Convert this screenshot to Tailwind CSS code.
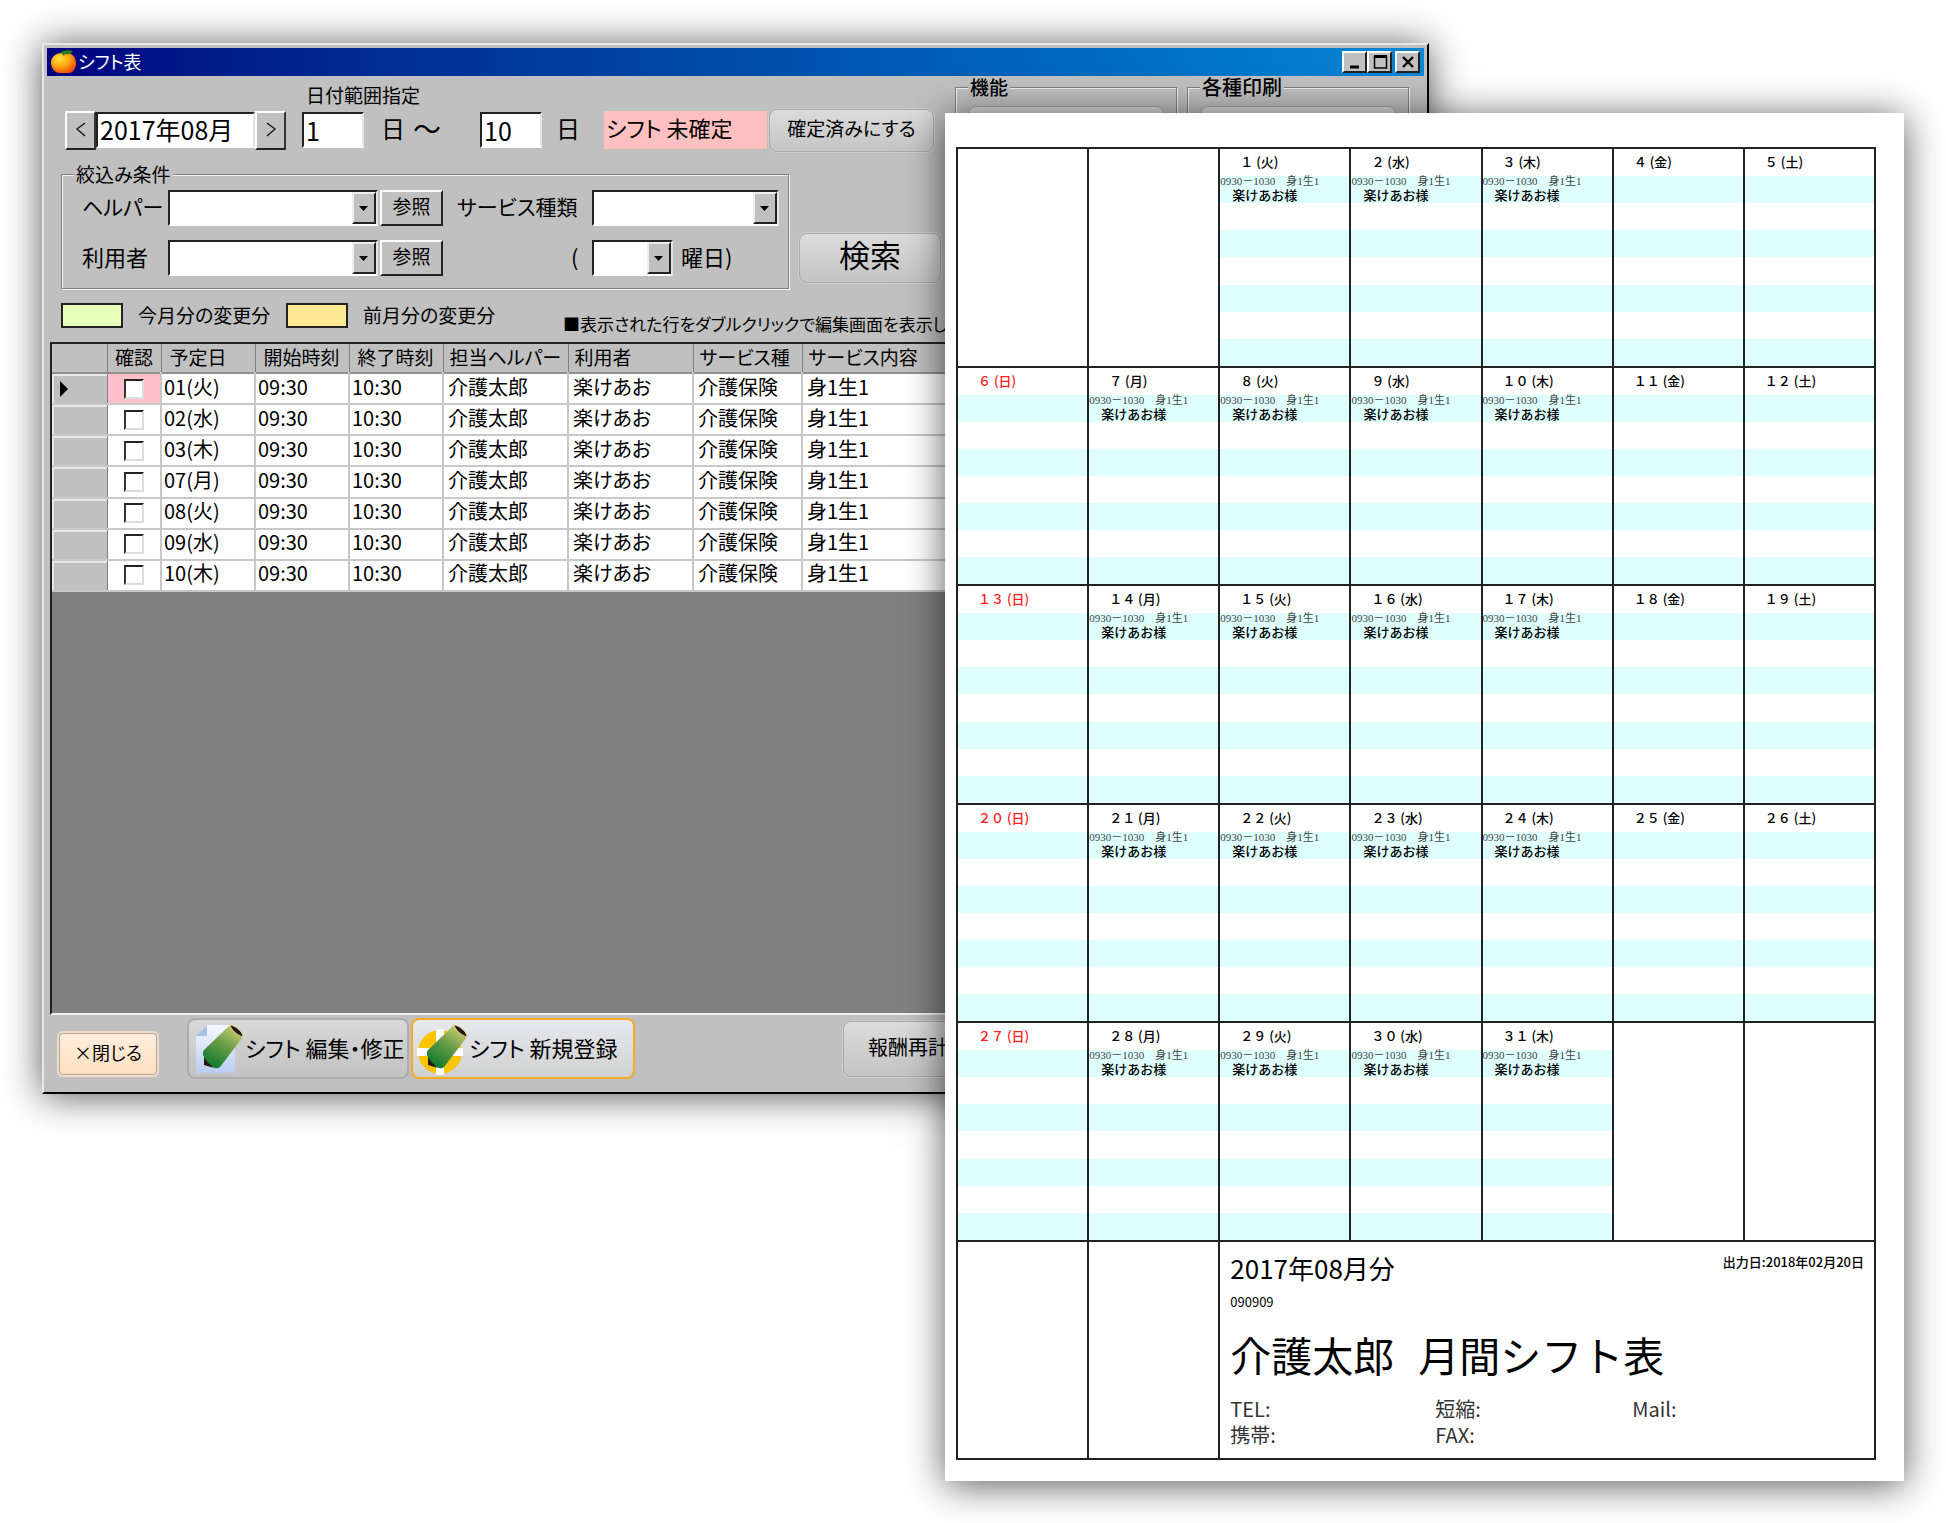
<!DOCTYPE html>
<html lang="ja">
<head>
<meta charset="utf-8">
<title>シフト表</title>
<script src="https://cdn.jsdelivr.net/npm/@tailwindcss/browser@4"></script>
</head>
<body class="min-h-screen bg-white text-black font-['Noto_Sans_CJK_JP',sans-serif]">
<main class="grid grid-cols-[42px_903fr_484fr_475fr_42px] items-start overflow-hidden pb-[42px]">

  <!-- Application window -->
  <section class="col-start-2 col-span-2 row-start-1 mt-[43px] min-w-0 border-2 border-t-[#e8e8e8] border-l-[#e8e8e8] border-r-black border-b-black bg-[#c0c0c0] p-[3px] shadow-[0_2px_36px_rgba(0,0,0,0.65)] [font-feature-settings:'palt']">
    <header class="flex h-7 items-center bg-linear-to-r from-[#00007f] to-[#1086d6] pl-[3px] pr-1">
      <svg class="h-6 w-7" viewBox="0 0 28 24" aria-hidden="true">
        <defs><radialGradient id="or" cx=".35" cy=".3" r=".8"><stop offset="0" stop-color="#ffe23a"/><stop offset=".5" stop-color="#ffa510"/><stop offset="1" stop-color="#f03a05"/></radialGradient></defs>
        <path d="M12 3C20 1 26 6 26 13c0 6-3 10-7 10-3 0-6 0-9 0-5 0-9-5-9-10C1 7 6 3 12 3z" fill="url(#or)"/>
        <path d="M11 2c3-2 8-2 12-1-2 3-5 4-8 3l-1 2-2-2z" fill="#2d7d1c"/>
      </svg>
      <h1 class="flex-1 pb-[2px] text-[18px] leading-6 text-white">シフト表</h1>
      <div class="flex">
        <button aria-label="最小化" class="flex h-[22px] w-[25px] items-center justify-center border-2 border-t-white border-l-white border-r-[#222] border-b-[#222] bg-[#c0c0c0]"><svg class="h-4 w-4" viewBox="0 0 16 16"><path d="M3 13h9" stroke="#000" stroke-width="3"/></svg></button>
        <button aria-label="最大化" class="flex h-[22px] w-[25px] items-center justify-center border-2 border-t-white border-l-white border-r-[#222] border-b-[#222] bg-[#c0c0c0]"><svg class="h-4 w-4" viewBox="0 0 16 16"><path d="M2 2.5h13" stroke="#000" stroke-width="3"/><path d="M2.5 2v12h12V2" fill="none" stroke="#000" stroke-width="1.5"/></svg></button>
        <button aria-label="閉じる" class="ml-[3px] flex h-[22px] w-[25px] items-center justify-center border-2 border-t-white border-l-white border-r-[#222] border-b-[#222] bg-[#c0c0c0]"><svg class="h-4 w-4" viewBox="0 0 16 16"><path d="M3 3l10 10M13 3L3 13" stroke="#000" stroke-width="2.4"/></svg></button>
      </div>
    </header>

    <div class="flex">
      <div class="w-[908px] shrink-0 pl-[14px] pt-1">
        <p class="pl-[245px] text-[19px] leading-[30px]">日付範囲指定</p>
        <div class="flex h-10 items-center pl-1 *:shrink-0">
          <button class="flex h-[39px] w-[31px] items-center justify-center border-2 border-t-white border-l-white border-r-[#333] border-b-[#222]" aria-label="前月"><svg class="h-5 w-4" viewBox="0 0 16 20"><path d="M12 3L4 9l8 7" fill="none" stroke="#111" stroke-width="1.3"/></svg></button>
          <input aria-label="年月" value="2017年08月" class="h-9 w-[159px] border-2 border-t-[#222] border-l-[#222] border-r-[#e4e4e4] border-b-white bg-white pl-[2px] pb-[2px] text-[25px] leading-7">
          <button class="flex h-[39px] w-[31px] items-center justify-center border-2 border-t-white border-l-white border-r-[#333] border-b-[#222]" aria-label="翌月"><svg class="h-5 w-4" viewBox="0 0 16 20"><path d="M4 3l8 6-8 7" fill="none" stroke="#111" stroke-width="1.3"/></svg></button>
          <input id="from" aria-label="開始日" value="1" class="ml-4 h-9 w-[62px] border-2 border-t-[#222] border-l-[#222] border-r-[#e4e4e4] border-b-white bg-white pl-[2px] text-[25px] leading-7">
          <label for="from" class="ml-[17px] pb-[5px] text-[24px] leading-8">日</label>
          <span class="ml-2 w-[67px] pb-[5px] text-[28px] leading-8">～</span>
          <input id="to" aria-label="終了日" value="10" class="h-9 w-[62px] border-2 border-t-[#222] border-l-[#222] border-r-[#e4e4e4] border-b-white bg-white pl-[2px] text-[25px] leading-7">
          <label for="to" class="ml-[14px] pb-[5px] text-[24px] leading-8">日</label>
          <p class="ml-auto h-[38px] w-[163px] bg-[#ffc0c0] pl-[2px] text-[22px] leading-8">シフト 未確定</p>
          <button class="ml-[2px] mr-[21px] h-[43px] w-[165px] rounded-lg border border-[#aaa] bg-linear-to-b from-[#dcdcdc] to-[#c4c4c4] pb-1 text-[19px] leading-8 ring-1 ring-[#cfcfcf]">確定済みにする</button>
        </div>

        <div class="mt-[14px] flex items-end">
          <fieldset class="w-[728px] shrink-0 border border-[#808080] pb-3 pl-5 shadow-[1px_1px_0_#f4f4f4,inset_1px_1px_0_#f4f4f4]">
            <legend class="-ml-2 bg-[#c0c0c0] px-[2px] text-[19px] leading-5">絞込み条件</legend>
            <div class="grid grid-cols-[86px_212px_63px_1fr] items-center gap-y-[14px] whitespace-nowrap pt-[6px]">
              <label for="helper" class="pb-1 text-[21px] leading-8">ヘルパー</label>
              <div class="flex h-9 w-[210px] border-2 border-t-[#222] border-l-[#222] border-r-[#e4e4e4] border-b-white bg-white">
                <select id="helper" class="min-w-0 flex-1 appearance-none bg-white"><option></option></select>
                <span class="flex w-6 items-center justify-center border-2 border-t-[#eee] border-l-[#eee] border-r-[#222] border-b-[#222] bg-[#c0c0c0]"><svg class="h-2 w-2.5 shrink-0" viewBox="0 0 10 8"><path d="M0 2h9L4.500 7z"/></svg></span>
              </div>
              <button class="h-9 w-[63px] border-2 border-t-white border-l-white border-r-[#222] border-b-[#222] pb-1 text-[19px] leading-7">参照</button>
              <div class="flex items-center pl-[14px]">
                <label for="kind" class="w-[135px] pb-1 text-[21px] leading-8">サービス種類</label>
                <div class="flex h-9 w-[187px] border-2 border-t-[#222] border-l-[#222] border-r-[#e4e4e4] border-b-white bg-white">
                  <select id="kind" class="min-w-0 flex-1 appearance-none bg-white"><option></option></select>
                  <span class="flex w-6 items-center justify-center border-2 border-t-[#eee] border-l-[#eee] border-r-[#222] border-b-[#222] bg-[#c0c0c0]"><svg class="h-2 w-2.5 shrink-0" viewBox="0 0 10 8"><path d="M0 2h9L4.500 7z"/></svg></span>
                </div>
              </div>
              <label for="user" class="pb-1 text-[22px] leading-8">利用者</label>
              <div class="flex h-9 w-[210px] border-2 border-t-[#222] border-l-[#222] border-r-[#e4e4e4] border-b-white bg-white">
                <select id="user" class="min-w-0 flex-1 appearance-none bg-white"><option></option></select>
                <span class="flex w-6 items-center justify-center border-2 border-t-[#eee] border-l-[#eee] border-r-[#222] border-b-[#222] bg-[#c0c0c0]"><svg class="h-2 w-2.5 shrink-0" viewBox="0 0 10 8"><path d="M0 2h9L4.500 7z"/></svg></span>
              </div>
              <button class="h-9 w-[63px] border-2 border-t-white border-l-white border-r-[#222] border-b-[#222] pb-1 text-[19px] leading-7">参照</button>
              <div class="flex items-center pl-[128px]">
                <span class="w-[21px] pb-1 text-[22px] leading-8">(</span>
                <div class="flex h-9 w-[81px] border-2 border-t-[#222] border-l-[#222] border-r-[#e4e4e4] border-b-white bg-white">
                  <select id="dow" class="min-w-0 flex-1 appearance-none bg-white"><option></option></select>
                  <span class="flex w-6 items-center justify-center border-2 border-t-[#eee] border-l-[#eee] border-r-[#222] border-b-[#222] bg-[#c0c0c0]"><svg class="h-2 w-2.5 shrink-0" viewBox="0 0 10 8"><path d="M0 2h9L4.500 7z"/></svg></span>
                </div>
                <label for="dow" class="pb-1 pl-2 text-[22px] leading-8">曜日)</label>
              </div>
            </div>
          </fieldset>
          <button class="mb-[6px] ml-[10px] h-[50px] w-[142px] shrink-0 rounded-lg border border-[#aaa] bg-linear-to-b from-[#dcdcdc] to-[#c4c4c4] pb-[9px] text-[31px] leading-9 ring-1 ring-[#cfcfcf]">検索</button>
        </div>

        <div class="mt-[14px] flex h-[35px] whitespace-nowrap text-[19px] leading-[23px] *:shrink-0">
          <span class="h-[25px] w-[62px] border-2 border-[#222] bg-[#e6ffb9]"></span>
          <span class="w-[163px] pl-[15px]">今月分の変更分</span>
          <span class="h-[25px] w-[62px] border-2 border-[#222] bg-[#ffe994]"></span>
          <span class="w-[215px] pl-[15px]">前月分の変更分</span>
          <span class="self-end pb-[3px] text-[17px]">■表示された行をダブルクリックで編集画面を表示し</span>
        </div>
      </div>

      <div class="flex flex-1 gap-[10px] pb-2 pr-[15px] pt-px">
        <fieldset class="min-w-0 flex-1 border border-[#808080] px-3 shadow-[1px_1px_0_#f4f4f4,inset_1px_1px_0_#f4f4f4]">
          <legend class="bg-[#c0c0c0] px-[2px] text-[19px] font-medium leading-5">機能</legend>
          <button aria-label="機能" class="mt-[9px] block h-11 w-full rounded-lg border border-[#aaa] bg-linear-to-b from-[#dcdcdc] to-[#c4c4c4]"></button>
        </fieldset>
        <fieldset class="min-w-0 flex-1 border border-[#808080] px-3 shadow-[1px_1px_0_#f4f4f4,inset_1px_1px_0_#f4f4f4]">
          <legend class="bg-[#c0c0c0] px-[2px] text-[20px] font-medium leading-5">各種印刷</legend>
          <button aria-label="各種印刷" class="mt-[9px] block h-11 w-full rounded-lg border border-[#aaa] bg-linear-to-b from-[#dcdcdc] to-[#c4c4c4]"></button>
        </fieldset>
      </div>
    </div>

    <div class="ml-[3px] mt-1 min-h-[673px] border-2 border-t-[#222] border-l-[#222] border-r-white border-b-[#f0f0f0] bg-[#808080]">
      <table class="h-[248px] w-full table-fixed border-collapse bg-white text-[20px] leading-6">
        <colgroup><col class="w-[55px]"><col class="w-[54px]"><col class="w-[94px]"><col class="w-[94px]"><col class="w-[94px]"><col class="w-[125px]"><col class="w-[125px]"><col class="w-[109px]"><col></colgroup>
        <thead>
          <tr class="h-[29px] border-b-2 border-[#909090] bg-[#c0c0c0] text-left text-[19px] leading-[22px] *:pb-[3px]">
            <td class="border-r border-[#808080]"></td>
            <th class="border-r border-[#808080] px-1 text-center font-normal whitespace-nowrap">確認</th>
            <th class="border-r border-[#808080] pl-2 font-normal whitespace-nowrap">予定日</th>
            <th class="border-r border-[#808080] pl-2 font-normal whitespace-nowrap">開始時刻</th>
            <th class="border-r border-[#808080] pl-2 font-normal whitespace-nowrap">終了時刻</th>
            <th class="border-r border-[#808080] pl-[6px] font-normal whitespace-nowrap">担当ヘルパー</th>
            <th class="border-r border-[#808080] pl-[6px] font-normal whitespace-nowrap">利用者</th>
            <th class="border-r border-[#808080] pl-[6px] font-normal whitespace-nowrap">サービス種</th>
            <th class="pl-[6px] font-normal whitespace-nowrap">サービス内容</th>
          </tr>
        </thead>
        <tbody id="rows"></tbody>
      </table>
    </div>

    <footer class="flex items-center whitespace-nowrap pb-[10px] pl-3 pt-[3px] *:shrink-0">
      <button class="mb-1 h-[42px] w-[98px] self-end rounded-sm border border-[#b0a8a0] bg-linear-to-b from-[#ffeedd] to-[#ffdfc0] pb-1 text-[18px] leading-8 ring-2 ring-[#f3dcc6]">×閉じる</button>
      <button class="ml-[30px] flex h-[61px] w-[222px] items-center rounded-lg border-2 border-[#ababab] bg-linear-to-b from-[#d8d8d8] to-[#c2c2c2] pl-[6px] text-[22px] leading-8">
        <svg class="h-[50px] w-[50px] shrink-0" viewBox="0 0 50 50" aria-hidden="true">
          <defs>
            <linearGradient id="pg" x1=".8" y1="0" x2=".2" y2="1"><stop offset="0" stop-color="#d3cf70"/><stop offset=".45" stop-color="#6a9c48"/><stop offset="1" stop-color="#06782a"/></linearGradient>
            <linearGradient id="pp" x1="0" y1="0" x2="0" y2="1"><stop offset="0" stop-color="#f4f8ff"/><stop offset="1" stop-color="#b9cdf0"/></linearGradient>
            <g id="pencil"><path d="M9 33v8l10 3z" fill="#2a1612"/><path d="M35 1c4 1 13 6 13 12L25 43q-2 2-5 1Q12 40 8 31q-1-3 1-5z" fill="url(#pg)"/><path d="M35 1c4 0 13 6 13 12-5-1-12-7-13-12z" fill="#2a1612" stroke="#e5d88a" stroke-width="1"/></g>
          </defs>
          <path d="M12 1h28v48H1V12z" fill="url(#pp)"/><path d="M12 1v11H1z" fill="#a9bfe6"/>
          <use href="#pencil"/>
        </svg>
        <span class="pb-1">シフト 編集・修正</span>
      </button>
      <button class="ml-[2px] flex h-[61px] w-[224px] items-center rounded-lg border-2 border-[#f8ab22] bg-linear-to-b from-[#e6e9ee] to-[#d0d0d0] pl-[4px] text-[22px] leading-8">
        <svg class="h-[52px] w-[52px] shrink-0" viewBox="0 0 52 52" aria-hidden="true">
          <circle cx="23" cy="29" r="22" fill="#ffc400"/><path d="M19 6h8v46h-8zM0 25h46v8H0z" fill="#fff"/>
          <use href="#pencil" transform="translate(2 1)"/>
        </svg>
        <span class="pb-1">シフト 新規登録</span>
      </button>
      <button class="ml-[208px] h-14 w-[170px] rounded-lg border border-[#aaa] bg-linear-to-b from-[#dcdcdc] to-[#c4c4c4] pb-1 pl-6 text-left text-[20px] leading-8 ring-1 ring-[#cfcfcf]">報酬再計算</button>
    </footer>
  </section>

  <!-- Printed monthly calendar -->
  <section class="col-start-3 col-span-2 row-start-1 z-10 mt-[113px] min-w-0 bg-white pb-[21px] pl-[11px] pr-7 pt-[34px] shadow-[0_4px_36px_rgba(0,0,0,0.65)]">
    <table class="w-full table-fixed border-collapse">
      <tbody id="cal"></tbody>
    </table>
  </section>
</main>

<template id="summary">
  <td colspan="5" class="border-2 border-[#222] p-0 align-top">
    <div class="pl-[10px] pr-[10px] pt-[6px]">
      <div class="flex justify-between">
        <h2 class="text-[26px] leading-10">2017年08月分</h2>
        <p class="text-[13px] leading-7 font-medium">出力日:2018年02月20日</p>
      </div>
      <p class="pt-1 text-[13px] leading-5">090909</p>
      <p class="flex gap-6 pt-3 text-[41px] leading-[60px]"><span>介護太郎</span><span>月間シフト表</span></p>
      <div class="grid grid-cols-[205px_197px_1fr] pt-3 text-[20px] leading-[26px] text-[#333]">
        <span>TEL:</span><span>短縮:</span><span>Mail:</span>
        <span>携帯:</span><span>FAX:</span>
      </div>
    </div>
  </td>
</template>

<script>
  const shifts = ['01(火)', '02(水)', '03(木)', '07(月)', '08(火)', '09(水)', '10(木)'];
  document.getElementById('rows').innerHTML = shifts.map((d, i) => `
    <tr class="border-b-2 border-[#c8c8c8]">
      <td class="border-r border-t border-[#808080] bg-[#c0c0c0] p-0 pl-2 shadow-[inset_2px_2px_0_#e8e8e8]">${i ? '' : '<svg class="h-4 w-2" viewBox="0 0 8 16"><path d="M0 0l8 8-8 8z"/></svg>'}</td>
      <td class="border-r-2 border-[#c8c8c8] p-0 ${i ? 'bg-white' : 'bg-[#ffc0cb]'}"><input type="checkbox" aria-label="確認 ${d}" class="mx-auto block h-5 w-5 appearance-none border-2 border-t-[#222] border-l-[#333] border-r-[#ddd] border-b-[#ddd] bg-white"></td>
      <td class="border-r-2 border-[#c8c8c8] p-0 pb-1 pl-[2px]">${d}</td>
      <td class="border-r-2 border-[#c8c8c8] p-0 pb-1 pl-[2px]">09:30</td>
      <td class="border-r-2 border-[#c8c8c8] p-0 pb-1 pl-[2px]">10:30</td>
      <td class="border-r-2 border-[#c8c8c8] p-0 pb-1 pl-1">介護太郎</td>
      <td class="border-r-2 border-[#c8c8c8] p-0 pb-1 pl-1">楽けあお</td>
      <td class="border-r-2 border-[#c8c8c8] p-0 pb-1 pl-1">介護保険</td>
      <td class="p-0 pb-1 pl-1">身1生1</td>
    </tr>`).join('');

  const wide = n => String(n).replace(/\d/g, c => String.fromCharCode(c.charCodeAt(0) + 0xFEE0));
  const days = '日月火水木金土';
  const blank = '<td class="border-2 border-[#222] p-0"></td>';
  let html = '';
  for (let w = 0; w < 5; w++) {
    html += w % 2 ? '<tr class="h-[218px]">' : '<tr class="h-[219px]">';
    for (let c = 0; c < 7; c++) {
      const n = w * 7 + c - 1;
      if (n < 1 || n > 31) { html += blank; continue; }
      const work = c > 0 && c < 5;
      html += `<td class="border-2 border-[#222] bg-[repeating-linear-gradient(to_bottom,#fff_0_12.5%,#dfffff_12.5%_25%)] p-0 align-top">
        <p class="pl-5 pt-[3px] text-[13px] leading-5 font-medium ${c ? 'text-black' : 'text-[#ff2020]'}">${wide(n)} (${days[c]})</p>
        ${work ? `<p class="overflow-hidden whitespace-nowrap pt-[3px] font-['Liberation_Serif','Noto_Sans_CJK_JP',serif] text-[11px] leading-3 text-[#444]">0930－1030　身1生1</p>
        <p class="pl-3 text-[13px] leading-4 font-medium">楽けあお様</p>` : ''}
      </td>`;
    }
    html += '</tr>';
  }
  html += '<tr class="h-[218px]">' + blank + blank + document.getElementById('summary').innerHTML + '</tr>';
  document.getElementById('cal').innerHTML = html;
</script>
</body>
</html>
